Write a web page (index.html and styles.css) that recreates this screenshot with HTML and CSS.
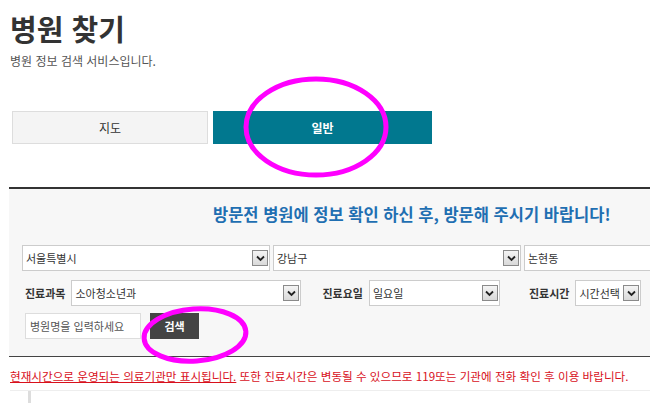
FILE: index.html
```html
<!DOCTYPE html>
<html lang="ko">
  <head>
    <meta charset="UTF-8" />
    <meta name="viewport" content="width=device-width, initial-scale=1.0" />
    <title>병원 찾기</title>
    <link rel="stylesheet" href="styles.css">
  </head>
  <body>
    <div class="page">
      <h1 class="page-title">병원 찾기</h1>
      <p class="page-desc">병원 정보 검색 서비스입니다.</p>

      <div class="tabs">
        <button class="tab">지도</button>
        <button class="tab tab-active">일반</button>
      </div>

      <div class="search-box">
        <h2 class="search-notice">방문전 병원에 정보 확인 하신 후, 방문해 주시기 바랍니다!</h2>

        <div class="row region-row">
          <div class="select-wrap wide">
            <select><option>서울특별시</option></select>
            <span class="arrow"><svg width="9" height="7" viewBox="0 0 9 7"><path d="M1 1.5 L4.5 5 L8 1.5" fill="none" stroke="#222" stroke-width="1.8"/></svg></span>
          </div>
          <div class="select-wrap wide">
            <select><option>강남구</option></select>
            <span class="arrow"><svg width="9" height="7" viewBox="0 0 9 7"><path d="M1 1.5 L4.5 5 L8 1.5" fill="none" stroke="#222" stroke-width="1.8"/></svg></span>
          </div>
          <div class="select-wrap wide">
            <select><option>논현동</option></select>
            <span class="arrow"><svg width="9" height="7" viewBox="0 0 9 7"><path d="M1 1.5 L4.5 5 L8 1.5" fill="none" stroke="#222" stroke-width="1.8"/></svg></span>
          </div>
        </div>

        <div class="row filter-row">
          <label class="filter-label">진료과목</label>
          <div class="select-wrap subject">
            <select><option>소아청소년과</option></select>
            <span class="arrow"><svg width="9" height="7" viewBox="0 0 9 7"><path d="M1 1.5 L4.5 5 L8 1.5" fill="none" stroke="#222" stroke-width="1.8"/></svg></span>
          </div>
          <label class="filter-label day-label">진료요일</label>
          <div class="select-wrap day">
            <select><option>일요일</option></select>
            <span class="arrow"><svg width="9" height="7" viewBox="0 0 9 7"><path d="M1 1.5 L4.5 5 L8 1.5" fill="none" stroke="#222" stroke-width="1.8"/></svg></span>
          </div>
          <label class="filter-label time-label">진료시간</label>
          <div class="select-wrap time">
            <select><option>시간선택</option></select>
            <span class="arrow"><svg width="9" height="7" viewBox="0 0 9 7"><path d="M1 1.5 L4.5 5 L8 1.5" fill="none" stroke="#222" stroke-width="1.8"/></svg></span>
          </div>
        </div>

        <div class="row name-row">
          <input class="name-input" type="text" placeholder="병원명을 입력하세요" />
          <button class="search-button">검색</button>
        </div>
      </div>

      <p class="warning">
        <u>현재시간으로 운영되는 의료기관만 표시됩니다.</u> 또한 진료시간은 변동될 수 있으므로 119또는 기관에 전화 확인 후 이용 바랍니다.
      </p>

      <div class="result-list"></div>
    </div>

    <svg class="marks" width="650" height="403" viewBox="0 0 650 403">
      <ellipse cx="316" cy="127" rx="70" ry="48" fill="none" stroke="#ff00ff" stroke-width="5"/>
      <ellipse cx="195" cy="335" rx="51" ry="26" fill="none" stroke="#ff00ff" stroke-width="5" transform="rotate(-4 195 335)"/>
    </svg>
  </body>
</html>
```

FILE: styles.css
```css
body {
  font-family: "Noto Sans CJK KR", "Noto Sans", sans-serif;
  background-color: #fff;
  margin: 0;
  padding: 0;
  overflow: hidden;
}

.page {
  padding: 0 0 0 9px;
  width: 1000px;
}

.page-title {
  font-size: 29px;
  font-weight: bold;
  color: #333;
  margin: 8px 0 0 1px;
  line-height: 40px;
}

.page-desc {
  font-size: 12px;
  color: #555;
  margin: 5px 0 0 1px;
  line-height: 16px;
}

.tabs {
  display: flex;
  gap: 5px;
  margin: 42px 0 0 3px;
}

.tab {
  font-family: inherit;
  height: 33px;
  border: 1px solid #ddd;
  background-color: #f4f4f4;
  color: #333;
  font-size: 12px;
  width: 196px;
  padding: 0;
}

.tab-active {
  width: 219px;
  border-color: #01788f;
  background-color: #01788f;
  color: #fff;
  font-weight: bold;
}

.search-box {
  margin-top: 43px;
  border-top: 2px solid #333;
  border-bottom: 1px solid #444;
  background-color: #f7f7f7;
  padding: 14px 0 17px 13px;
}

.search-notice {
  font-size: 16.5px;
  font-weight: bold;
  color: #1f6fb2;
  margin: 0 0 20px 191px;
  line-height: 22px;
}

.row {
  display: flex;
  align-items: center;
}

.region-row {
  gap: 3px;
}

.filter-row {
  margin-top: 9px;
  padding-left: 3px;
}

.name-row {
  margin-top: 7px;
  padding-left: 3px;
  gap: 9px;
}

.select-wrap {
  display: flex;
  align-items: center;
  height: 26px;
  box-sizing: border-box;
  border: 1px solid #ccc;
  background-color: #fff;
  padding-right: 1px;
}

.select-wrap select {
  appearance: none;
  -webkit-appearance: none;
  border: none;
  background: transparent;
  font-family: inherit;
  font-size: 11px;
  color: #333;
  flex: 1;
  min-width: 0;
  padding: 0 0 0 3px;
  outline: none;
}

.arrow {
  display: flex;
  align-items: center;
  justify-content: center;
  width: 14px;
  height: 14px;
  border: 1px solid #8a8a8a;
  background: linear-gradient(#f4f4f4, #d9d9d9);
}

.wide {
  width: 248px;
}

.subject {
  width: 230px;
}

.day {
  width: 131px;
}

.time {
  width: 66px;
}

.filter-label {
  font-size: 11px;
  font-weight: bold;
  color: #333;
  margin-right: 6px;
}

.day-label {
  margin-left: 21px;
}

.time-label {
  margin-left: 29px;
}

.name-input {
  width: 116px;
  height: 26px;
  box-sizing: border-box;
  border: 1px solid #ddd;
  font-family: inherit;
  font-size: 11px;
  padding: 0 4px;
}

.name-input::placeholder {
  color: #555;
}

.search-button {
  font-family: inherit;
  width: 49px;
  height: 26px;
  border: none;
  background-color: #444;
  color: #fff;
  font-size: 11px;
  font-weight: bold;
}

.warning {
  font-size: 11.6px;
  color: #d8101c;
  margin: 11px 0 0 1px;
  line-height: 16px;
  white-space: nowrap;
}

.result-list {
  margin-top: 6px;
  height: 40px;
  border-top: 1px solid #eee;
  margin-left: 1px;
}

.result-list::before {
  content: "";
  display: block;
  margin-left: 18px;
  width: 3px;
  height: 40px;
  background-color: #ddd;
}

.marks {
  position: absolute;
  top: 0;
  left: 0;
  pointer-events: none;
}
```
